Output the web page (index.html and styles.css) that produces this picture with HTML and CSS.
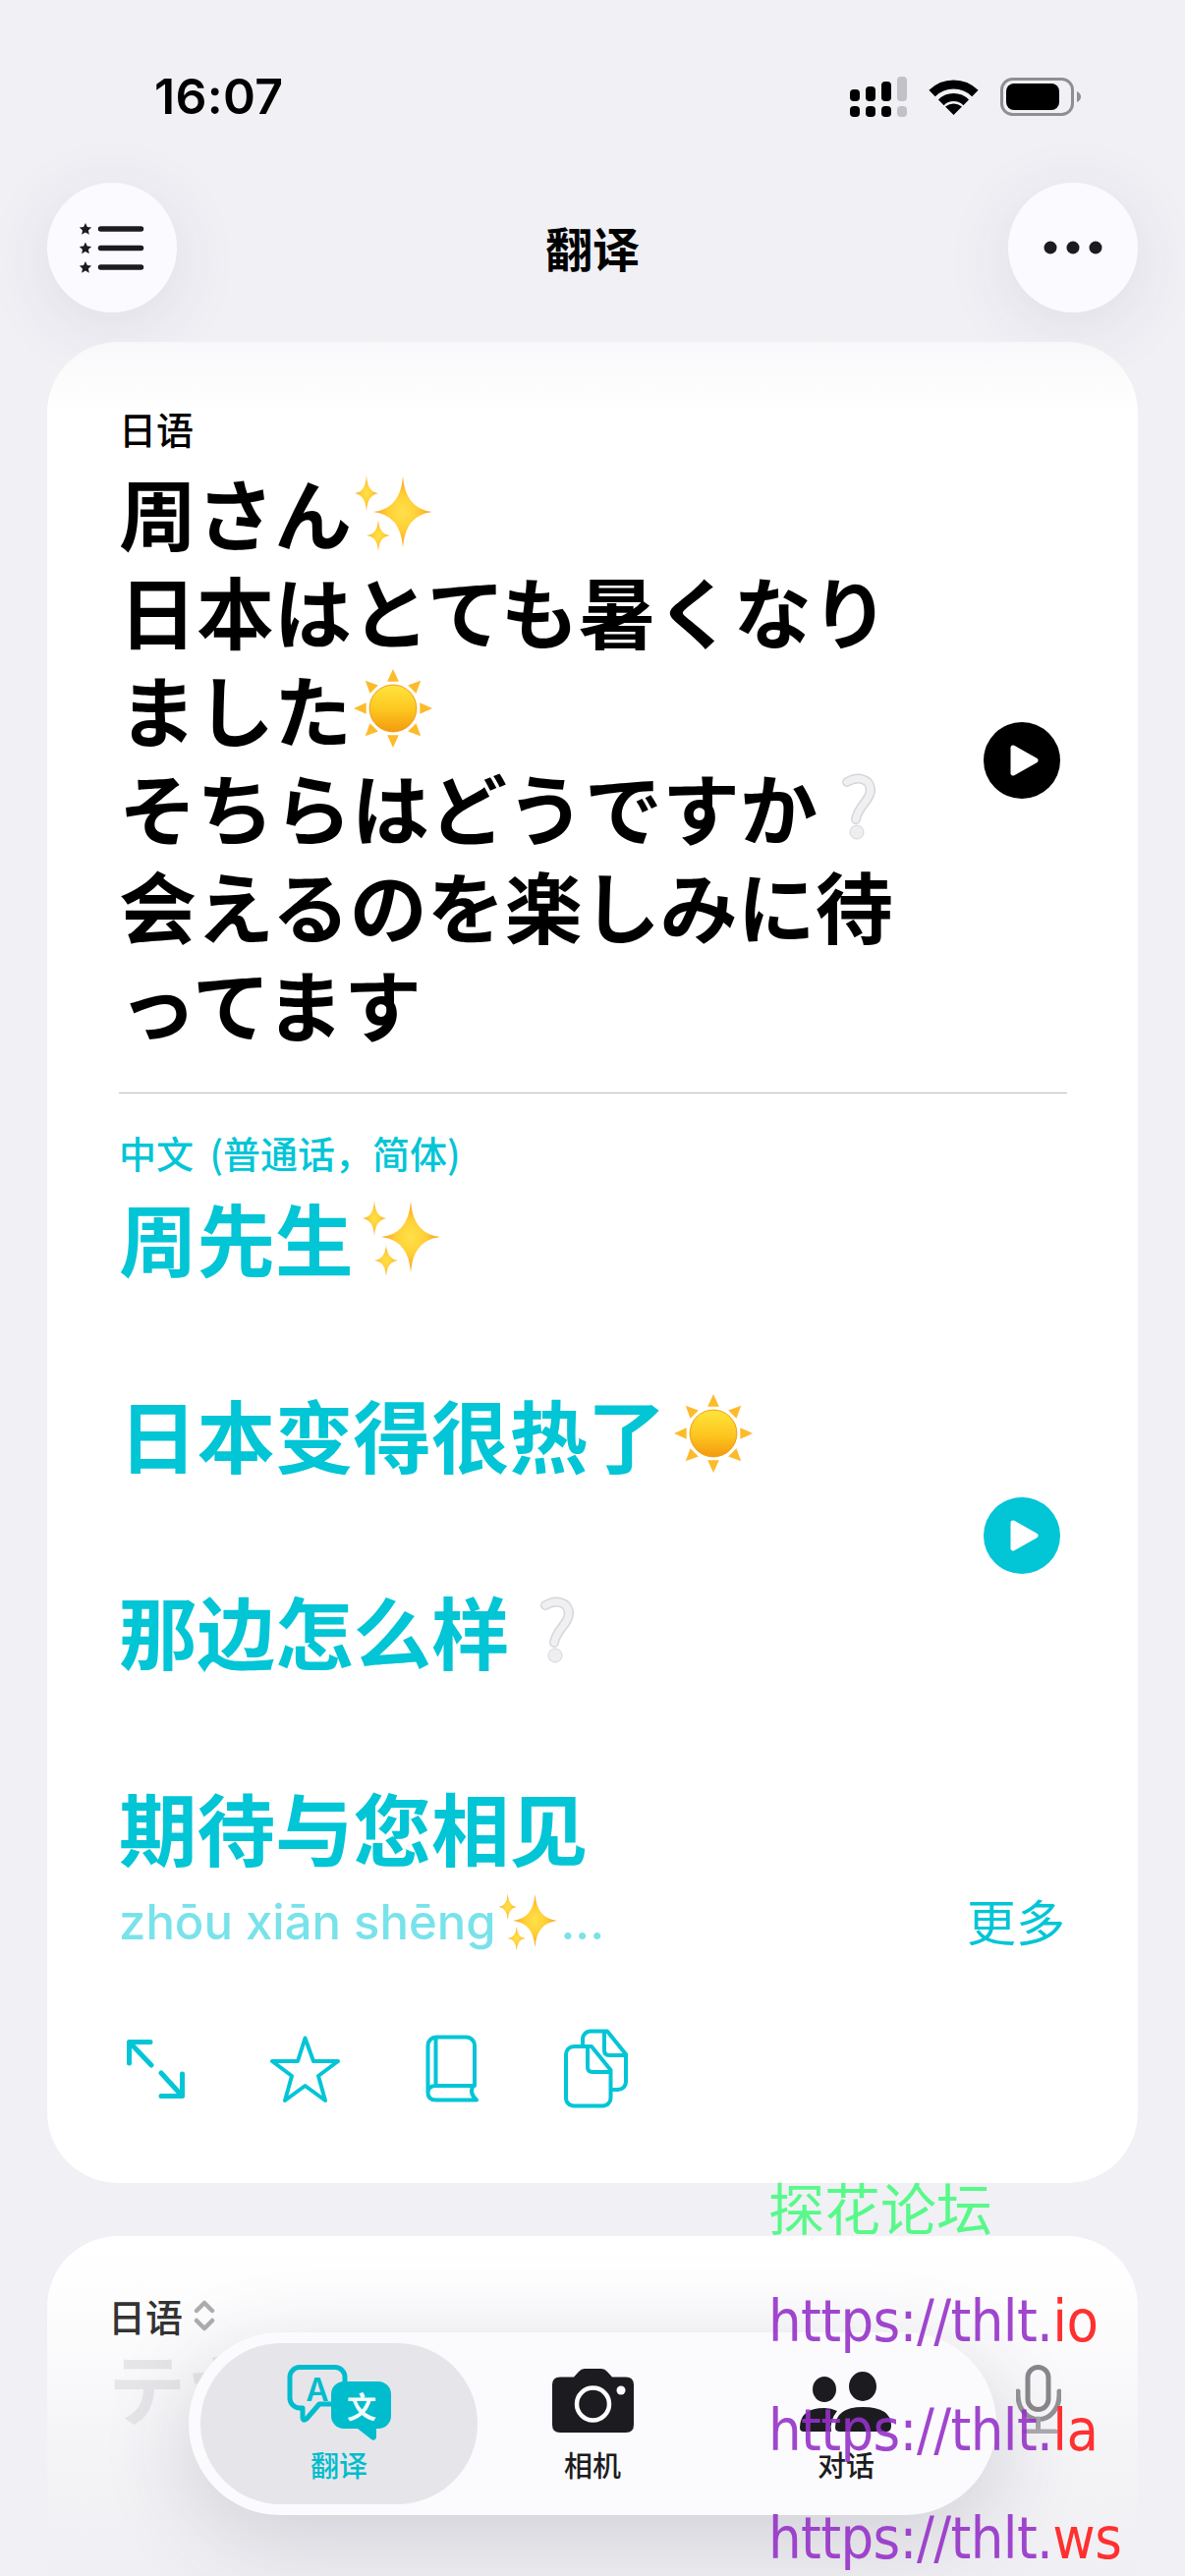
FILE: index.html
```html
<!DOCTYPE html>
<html lang="zh">
<head>
<meta charset="utf-8">
<title>翻译</title>
<link rel="stylesheet" href="styles.css">
</head>
<body>
<svg class="defs" width="0" height="0" aria-hidden="true">
  <defs>
    <radialGradient id="gold"><stop offset="0" stop-color="#ffe14a"/><stop offset=".5" stop-color="#ffcf35"/><stop offset="1" stop-color="#ff9a1c"/></radialGradient>
    <linearGradient id="sunfill" x1="0" y1="0" x2="0" y2="1"><stop offset="0" stop-color="#ffe53b"/><stop offset=".55" stop-color="#fcc51f"/><stop offset="1" stop-color="#f49a0e"/></linearGradient>
    <symbol id="sparkles" viewBox="0 0 80 80">
      <path fill="url(#gold)" d="M50 4Q52.500 37 80 40 52.500 43 50 76 47.500 43 20 40 47.500 37 50 4Z"/>
      <path fill="url(#gold)" d="M13 3Q14 20 25 21 14 23 13 39 12 23 1 21 12 20 13 3Z"/>
      <path fill="url(#gold)" d="M25 48Q26 63 37 64 26 65 25 80 24 65 13 64 24 63 25 48Z"/>
    </symbol>
    <symbol id="sun" viewBox="0 0 82 82">
      <circle cx="41" cy="41" r="24.500" fill="url(#sunfill)" stroke="#f09a14" stroke-width="1"/>
      <g fill="#fdbb2a">
        <path d="M41 0l6 13H35z"/>
        <path d="M41 0l6 13H35z" transform="rotate(45 41 41)"/>
        <path d="M41 0l6 13H35z" transform="rotate(90 41 41)"/>
        <path d="M41 0l6 13H35z" transform="rotate(135 41 41)"/>
        <path d="M41 0l6 13H35z" transform="rotate(180 41 41)"/>
        <path d="M41 0l6 13H35z" transform="rotate(225 41 41)"/>
        <path d="M41 0l6 13H35z" transform="rotate(270 41 41)"/>
        <path d="M41 0l6 13H35z" transform="rotate(315 41 41)"/>
      </g>
    </symbol>
    <symbol id="question" viewBox="0 0 80 80">
      <path fill="none" stroke="#d6d6d9" stroke-width="10" stroke-linecap="round" d="M28 15Q40 8 49 15 56 24 46 36 38 46 37 53"/>
      <path fill="none" stroke="#f0f0f2" stroke-width="7" stroke-linecap="round" d="M28 15Q40 8 49 15 56 24 46 36 38 46 37 53"/>
      <circle cx="38" cy="66" r="7" fill="#eeeef0" stroke="#d6d6d9"/>
    </symbol>
    <symbol id="play" viewBox="0 0 78 78">
      <circle cx="39" cy="39" r="39" fill="currentColor"/>
      <path fill="#fff" stroke="#fff" stroke-width="5" stroke-linejoin="round" d="M30 26L53 39 30 52Z"/>
    </symbol>
  </defs>
</svg>

<div class="app">
  <div class="status">
    <span class="time">16:07</span>
    <div class="status-icons">
      <svg width="58" height="41" viewBox="0 0 58 41">
        <g fill="#000">
          <rect y="13" width="10" height="12" rx="4"/><rect x="16" y="10" width="10" height="15" rx="4"/><rect x="32" y="5" width="10" height="20" rx="4"/>
          <rect y="30" width="10" height="11" rx="4"/><rect x="16" y="30" width="10" height="11" rx="4"/><rect x="32" y="30" width="10" height="11" rx="4"/>
        </g>
        <g fill="#c1c1c7"><rect x="48" width="10" height="25" rx="4"/><rect x="48" y="30" width="10" height="11" rx="4"/></g>
      </svg>
      <svg width="51" height="37" viewBox="0 0 51 37">
        <path fill="none" stroke="#000" stroke-width="9" d="M3.600 15A31 31 0 0 1 47.400 15"/>
        <path fill="none" stroke="#000" stroke-width="8" d="M12.800 24.300A18 18 0 0 1 38.200 24.300"/>
        <path fill="#000" d="M25.500 37L17 28.500Q25.500 22.500 34 28.500Z"/>
      </svg>
      <svg width="82" height="39" viewBox="0 0 82 39">
        <rect x="1.500" y="1.500" width="72" height="36" rx="11" fill="none" stroke="#8e8e93" stroke-width="3"/>
        <rect x="6" y="6" width="54" height="27" rx="8" fill="#000"/>
        <path fill="#8e8e93" d="M78 14Q82 16 82 19.500 82 23 78 25Z"/>
      </svg>
    </div>
  </div>

  <header class="nav">
    <button class="round-btn" type="button" aria-label="收藏">
      <svg width="72" height="56" viewBox="0 0 72 56">
        <g fill="#1c1c20">
          <path transform="translate(3 3) scale(.85)" d="M7 0l2.200 4.700 5 .6-3.700 3.400 1 5L7 11.200 2.500 13.700l1-5L-.2 5.300l5-.6z"/>
          <path transform="translate(3 22.500) scale(.85)" d="M7 0l2.200 4.700 5 .6-3.700 3.400 1 5L7 11.200 2.500 13.700l1-5L-.2 5.300l5-.6z"/>
          <path transform="translate(3 42) scale(.85)" d="M7 0l2.200 4.700 5 .6-3.700 3.400 1 5L7 11.200 2.500 13.700l1-5L-.2 5.300l5-.6z"/>
        </g>
        <g stroke="#1c1c20" stroke-width="5.500" stroke-linecap="round"><path d="M24.500 9H65.500M24.500 28.500H65.500M24.500 48H65.500"/></g>
      </svg>
    </button>
    <h1 class="nav-title">翻译</h1>
    <button class="round-btn" type="button" aria-label="更多选项">
      <svg width="60" height="14" viewBox="0 0 60 14"><g fill="#1c1c20"><circle cx="7" cy="7" r="6.500"/><circle cx="30" cy="7" r="6.500"/><circle cx="53" cy="7" r="6.500"/></g></svg>
    </button>
  </header>

  <main class="cards">
    <section class="card card-main">
      <div class="lang">日语</div>
      <div class="text-row">
        <div class="phrase phrase-ja">
          <div class="line">周さん<svg class="emoji"><use href="#sparkles"/></svg></div>
          <div class="line">日本はとても暑くなり</div>
          <div class="line">ました<svg class="emoji"><use href="#sun"/></svg></div>
          <div class="line">そちらはどうですか<svg class="emoji"><use href="#question"/></svg></div>
          <div class="line">会えるのを楽しみに待</div>
          <div class="line">ってます</div>
        </div>
        <svg class="play play-black"><use href="#play"/></svg>
      </div>
      <div class="divider"></div>
      <div class="lang lang-teal">中文 (普通话，简体)</div>
      <div class="text-row">
        <div class="phrase phrase-zh">
          <div class="line">周先生<svg class="emoji"><use href="#sparkles"/></svg></div>
          <div class="line">日本变得很热了<svg class="emoji"><use href="#sun"/></svg></div>
          <div class="line">那边怎么样<svg class="emoji"><use href="#question"/></svg></div>
          <div class="line">期待与您相见</div>
        </div>
        <svg class="play play-teal"><use href="#play"/></svg>
      </div>
      <div class="pinyin-row">
        <div class="pinyin">zhōu xiān shēng<svg class="emoji-small"><use href="#sparkles"/></svg>...</div>
        <div class="more">更多</div>
      </div>
      <div class="actions">
        <svg width="60" height="61" viewBox="0 0 60 61" class="act">
          <path d="M25 3.500H3.500V25M4 4L26 27M36 35L57 58M57.500 36V58.500H36"/>
        </svg>
        <svg width="71" height="68" viewBox="0 0 71 68" class="act act-thin">
          <path d="M35.500 2.500L44 26H69L49 41 56 66 35.500 51 15 66 22 41 2 26H28Z"/>
        </svg>
        <svg width="54" height="69" viewBox="0 0 54 69" class="act act-thin">
          <path d="M52 66.500H11Q2.500 66.500 2.500 59 2.500 52 11 52H50V11A8.500 8.500 0 0 0 41.500 2.500H11A8.500 8.500 0 0 0 2.500 11V59M10.500 3V52M50 50Q43 58 52 66.500"/>
        </svg>
        <svg width="65" height="81" viewBox="0 0 65 81" class="act act-thin">
          <path d="M10 18H28L47.500 42V70A8 8 0 0 1 39.500 78.500H10A8 8 0 0 1 2 70V26A8 8 0 0 1 10 18ZM24 18V39Q24 44 29 44H47.500"/>
          <path d="M19 16V11A8 8 0 0 1 27 2.500H44L63 26V54A8 8 0 0 1 55 62H49M41 3V22Q41 27 46 27H63"/>
        </svg>
      </div>
    </section>

    <section class="card card-input">
      <div class="lang lang-picker">日语
        <svg width="22" height="32" viewBox="0 0 22 32"><path fill="none" stroke="#adadb0" stroke-width="4.500" stroke-linecap="round" stroke-linejoin="round" d="M3 11L11 3 19 11M3 21L11 29 19 21"/></svg>
      </div>
      <div class="input-row">
        <div class="placeholder">テキストを入力</div>
        <svg width="46" height="70" viewBox="0 0 46 70" class="mic">
          <rect x="12" y="2.500" width="21" height="43" rx="10.500" stroke="#88888c"/>
          <path d="M2 27V31A20.500 24 0 0 0 44 31V27" stroke="#939397"/>
          <path d="M22.500 55V68" stroke="#a5a5a9"/>
          <path d="M9 68H40" stroke="#aaaaae"/>
        </svg>
      </div>
    </section>
  </main>

  <nav class="tabbar">
    <div class="tab tab-active">
      <svg width="106" height="78" viewBox="0 0 106 78" class="tab-icon">
        <path fill="none" stroke="#00bccd" stroke-width="5" stroke-linejoin="round" d="M13 2.500H49A10 10 0 0 1 59 12.500V40H33L20 55Q16 58 16 53V44H13A10 10 0 0 1 3 34V12.500A10 10 0 0 1 13 2.500Z"/>
        <path fill="#00bccd" d="M58 17H93A13 13 0 0 1 106 30V52A13 13 0 0 1 93 65H91V74Q90 78 86 76L72 65H58A13 13 0 0 1 45 52V30A13 13 0 0 1 58 17Z"/>
        <text x="31" y="37" class="glyph-a">A</text>
        <text x="76" y="54" class="glyph-wen">文</text>
      </svg>
      <span class="tab-label">翻译</span>
    </div>
    <div class="tab">
      <svg width="83" height="65" viewBox="0 0 83 65" class="tab-icon icon-camera">
        <path fill="#1c1c20" d="M8 8.500H22L27 3Q29.500 0 33 0H50Q53.500 0 56 3L61 8.500H75Q83 8.500 83 16.500V57Q83 65 75 65H8Q0 65 0 57V16.500Q0 8.500 8 8.500Z"/>
        <circle cx="41.500" cy="36" r="16.500" fill="none" stroke="#fff" stroke-width="4.500"/>
        <circle cx="70" cy="22" r="4.500" fill="#fff"/>
      </svg>
      <span class="tab-label">相机</span>
    </div>
    <div class="tab">
      <svg width="94" height="62" viewBox="0 0 94 62" class="tab-icon icon-people">
        <g fill="#1c1c20">
          <ellipse cx="25" cy="18" rx="12" ry="13"/>
          <ellipse cx="64" cy="15" rx="14" ry="15"/>
          <path d="M0 57Q0 37 25 37 32 37 38 40 30 50 32 61H4Q0 61 0 57Z"/>
          <path d="M36 57Q36 36 64 36 93 36 93 55 93 61 88 61H41Q36 61 36 57Z"/>
        </g>
      </svg>
      <span class="tab-label">对话</span>
    </div>
  </nav>

  <aside class="watermark">
    <div class="wm-line wm-green">探花论坛</div>
    <div class="wm-line">https://thlt.<span class="wm-red">io</span></div>
    <div class="wm-line">https://thlt.<span class="wm-red">la</span></div>
    <div class="wm-line">https://thlt.<span class="wm-red">ws</span></div>
  </aside>
</div>
</body>
</html>
```
FILE: styles.css
```css
* { box-sizing: border-box; }
html, body { margin: 0; padding: 0; }
body { background: #f0f0f5; font-family: "Noto Sans CJK SC", "Noto Sans", sans-serif; color: #000; }
.defs { position: absolute; }
.app { position: relative; width: 1206px; height: 2622px; overflow: hidden; display: flex; flex-direction: column; background: #f0f0f5; }

.status { height: 186px; flex: none; padding: 70px 106px 0 157px; display: flex; justify-content: space-between; align-items: flex-start; }
.time { font: 600 50px/56px Inter, "Liberation Sans", sans-serif; letter-spacing: .3px; }
.status-icons { height: 56px; display: flex; align-items: center; gap: 22px; }

.nav { flex: none; height: 132px; margin: 0 48px; display: flex; justify-content: space-between; align-items: center; }
.nav-title { margin: 0 0 3px; font: 700 48px/60px "Noto Sans CJK SC", sans-serif; }
.round-btn { width: 132px; height: 132px; padding: 0; border: 0; border-radius: 50%; background: #fbfbff; display: flex; align-items: center; justify-content: center; box-shadow: 0 14px 70px rgba(60, 60, 90, .10); }

.cards { flex: 1; min-height: 0; margin: 30px 48px 0; display: flex; flex-direction: column; gap: 54px; }
.card { border-radius: 72px; }
.card-main { flex: none; height: 1874px; padding: 66px 72px 0 73px; background: linear-gradient(#f8f8fa 0, #fff 70px); }
.lang { font: 500 38px/44px "Noto Sans CJK SC", sans-serif; }
.lang-teal { margin-top: 38px; color: #02c5d6; word-spacing: 8px; }
.text-row { display: flex; align-items: center; justify-content: space-between; }
.phrase { flex: 1; display: flex; flex-direction: column; font-weight: 700; white-space: nowrap; }
.phrase-ja { margin-top: 13px; font-size: 79px; font-family: "Noto Sans CJK JP", sans-serif; }
.phrase-zh { margin-top: 14px; gap: 100px; font-size: 79.5px; font-family: "Noto Sans CJK SC", sans-serif; color: #02c5d6; }
.line { height: 100px; line-height: 100px; display: flex; align-items: center; }
.emoji { width: 80px; height: 80px; flex: none; }
.phrase-ja .emoji { margin-left: 2px; }
.phrase-zh .emoji { margin-left: 8px; }
.emoji-small { width: 60px; height: 60px; flex: none; margin: 0 4px 4px 2px; }
.play { width: 78px; height: 78px; flex: none; margin-right: 7px; }
.play-black { color: #000; margin-top: 19px; }
.play-teal { color: #02c5d6; margin-top: 22px; }
.divider { height: 1px; margin-top: 41px; background: #bcbcbe; }

.pinyin-row { margin-top: 15px; display: flex; justify-content: space-between; align-items: center; }
.pinyin { display: flex; align-items: center; font: 500 49px/60px Inter, "Liberation Sans", sans-serif; color: #79e2ea; }
.more { font: 400 50px/60px "Noto Sans CJK SC", sans-serif; color: #02c5d6; margin: 0 2px 6px 0; }

.actions { margin-top: 75px; padding-left: 7px; display: flex; align-items: center; gap: 87px; }
.act { fill: none; stroke: #02c5d6; stroke-width: 5; stroke-linecap: round; stroke-linejoin: round; flex: none; }
.act-thin { stroke-width: 4; }

.card-input { flex: 1; padding: 59px 0 0 62px; background: linear-gradient(#fff 0, #fdfdfe 70px, #f3f3f6 240px, #f0f0f4 346px); border-radius: 72px 72px 0 0; }
.lang-picker { display: flex; align-items: center; gap: 11px; color: #333; }
.input-row { margin-top: 0; padding-right: 78px; display: flex; justify-content: space-between; align-items: flex-start; }
.placeholder { font: 700 79px/100px "Noto Sans CJK JP", sans-serif; color: #e6e6e9; white-space: nowrap; }
.mic { flex: none; margin-top: 28px; fill: none; stroke-width: 5; stroke-linecap: round; }

.tabbar { position: absolute; left: 192px; top: 2374px; width: 822px; height: 186px; padding: 11px 24px; display: flex; background: #fbfbfe; border-radius: 93px; box-shadow: 0 24px 90px rgba(50, 50, 70, .18); }
.tab { position: relative; flex: 1; display: flex; flex-direction: column; align-items: center; padding-top: 22px; }
.tab-active::before { content: ""; position: absolute; left: -12px; right: -12px; top: 0; bottom: 0; border-radius: 82px; background: #e6e6ea; }
.tab-icon { position: relative; flex: none; }
.icon-camera { margin: 4px 0 9px; }
.icon-people { margin: 7px 0 9px; }
.tab-label { position: relative; margin-top: 5px; font: 500 29px/36px "Noto Sans CJK SC", sans-serif; color: #1c1c20; }
.tab-active .tab-label { color: #00bccd; }
.glyph-a { font: 600 32px Inter, sans-serif; fill: #00bccd; text-anchor: middle; }
.glyph-wen { font: 700 30px "Noto Sans CJK SC", sans-serif; fill: #f2fbfc; text-anchor: middle; }

.watermark { position: absolute; left: 782px; top: 2202px; pointer-events: none; white-space: nowrap; }
.wm-line { height: 110.500px; font: 400 59px/111px "DejaVu Sans Condensed", "DejaVu Sans", "Noto Sans CJK SC", sans-serif; font-stretch: condensed; letter-spacing: -.6px; color: rgba(150, 50, 200, .9); }
.wm-green { height: 70px; line-height: 70px; font-size: 57px; letter-spacing: 0; font-family: "Noto Sans CJK SC", sans-serif; font-weight: 400; color: #58f98a; margin: 8px 0 27px; }
.wm-red { color: #ff3030; }
```
